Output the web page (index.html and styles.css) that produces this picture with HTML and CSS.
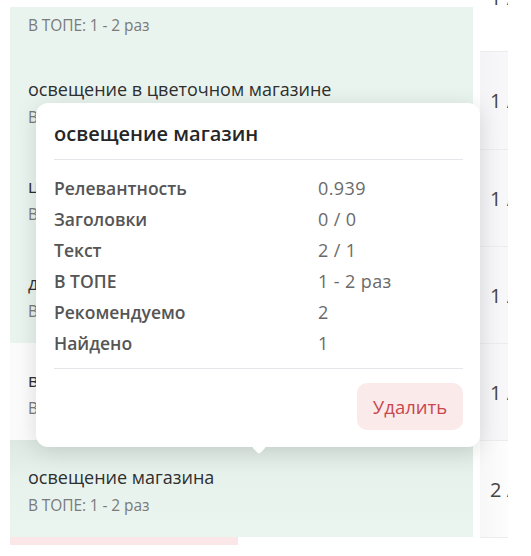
FILE: index.html
```html
<!DOCTYPE html>
<html lang="ru">
<head>
<meta charset="utf-8">
<link rel="stylesheet" href="styles.css">
</head>
<body>
<div class="page">
  <div class="list">
    <div class="row first">
      <div class="cell-main green topcut">
        <div class="sub">В ТОПЕ: 1 - 2 раз</div>
      </div>
      <div class="cell-side white"><span>1 / 2</span></div>
    </div>
    <div class="row">
      <div class="cell-main green">
        <div class="title">освещение в цветочном магазине</div>
        <div class="sub">В ТОПЕ: 1 - 2 раз</div>
      </div>
      <div class="cell-side"><span>1 / 2</span></div>
    </div>
    <div class="row">
      <div class="cell-main green">
        <div class="title">цветочный магазин освещение</div>
        <div class="sub">В ТОПЕ: 1 - 2 раз</div>
      </div>
      <div class="cell-side"><span>1 / 2</span></div>
    </div>
    <div class="row">
      <div class="cell-main green">
        <div class="title">дизайн освещения магазина</div>
        <div class="sub">В ТОПЕ: 1 - 2 раз</div>
      </div>
      <div class="cell-side"><span>1 / 2</span></div>
    </div>
    <div class="row">
      <div class="cell-main plain">
        <div class="title">витрина освещение магазин</div>
        <div class="sub">В ТОПЕ: 1 - 2 раз</div>
      </div>
      <div class="cell-side"><span>1 / 2</span></div>
    </div>
    <div class="row">
      <div class="cell-main green shaded">
        <div class="title">освещение магазина</div>
        <div class="sub">В ТОПЕ: 1 - 2 раз</div>
      </div>
      <div class="cell-side light"><span>2 / 2</span></div>
    </div>
    <div class="row last">
      <div class="pink-strip"></div>
    </div>
  </div>

  <div class="popup">
    <div class="popup-title">освещение магазин</div>
    <div class="popup-stats">
      <div class="label">Релевантность</div><div class="value">0.939</div>
      <div class="label">Заголовки</div><div class="value">0 / 0</div>
      <div class="label">Текст</div><div class="value">2 / 1</div>
      <div class="label">В ТОПЕ</div><div class="value">1 - 2 раз</div>
      <div class="label">Рекомендуемо</div><div class="value">2</div>
      <div class="label">Найдено</div><div class="value">1</div>
    </div>
    <div class="popup-actions">
      <button class="btn-delete" type="button">Удалить</button>
    </div>
    <div class="popup-arrow"></div>
  </div>
</div>
</body>
</html>
```

FILE: styles.css
```css
* { box-sizing: border-box; }
html, body { margin: 0; padding: 0; background: #fff; }
body {
  font-family: "Open Sans", "Noto Sans", sans-serif;
  color: #333;
  width: 531px;
  height: 556px;
  overflow: hidden;
}
.page {
  position: relative;
  width: 531px;
  height: 556px;
  overflow: hidden;
}
.list {
  margin-top: -45px;
  padding-left: 10px;
  display: flex;
  flex-direction: column;
}
.row {
  display: flex;
  height: 97px;
}
.cell-main {
  width: 463px;
  padding: 24px 18px 0 18px;
  display: flex;
  flex-direction: column;
}
.row.first .cell-main { padding-top: 55px; }
.cell-main.green { background: #e9f4ee; }
.cell-main.topcut { background: linear-gradient(#fff 52px, #e9f4ee 52px); }
.cell-main.plain { background: #fcfbfb; }
.cell-main.shaded { background: linear-gradient(#dde8e3, #e8f2ed 40%, #eaf5f0); }
.title {
  font-size: 18px;
  line-height: 26px;
  color: #2f2f2f;
  white-space: nowrap;
}
.sub {
  margin-top: 4px;
  font-size: 15.5px;
  line-height: 22px;
  color: #7a7a7a;
  letter-spacing: -0.1px;
  white-space: nowrap;
}
.cell-side {
  margin-left: 7px;
  width: 28px;
  border-top: 1px solid #ececee;
  background: linear-gradient(90deg, #f4f4f6, #f8f8fa);
  display: flex;
  align-items: center;
  padding-left: 10px;
  overflow: hidden;
  white-space: nowrap;
  font-size: 20px;
  color: #444;
}
.cell-side.white { background: #fff; border-top: none; border-bottom: 1px solid #ececee; }
.row.first .cell-side { align-items: flex-end; padding-bottom: 40px; }
.row.first + .row .cell-side { border-top: none; }
.cell-side.light { background: linear-gradient(90deg, #f7f7f8, #fdfdfd); }
.row.last { height: 40px; border-top: 1px solid #ececee; margin-left: 470px; width: 28px; }
.pink-strip {
  position: absolute;
  left: 10px;
  top: 537px;
  width: 228px;
  height: 8px;
  background: #fbe7e7;
}

.popup {
  position: absolute;
  left: 36px;
  top: 103px;
  width: 444px;
  height: 344px;
  background: #fff;
  border-radius: 12px;
  box-shadow: 0 4px 22px rgba(0, 0, 0, 0.13);
  padding: 18px 17px 17px 18px;
  display: flex;
  flex-direction: column;
}
.popup-title {
  font-size: 20px;
  line-height: 26px;
  font-weight: 600;
  color: #262626;
  padding-bottom: 12px;
  border-bottom: 1px solid #e6e6ea;
  white-space: nowrap;
}
.popup-stats {
  display: grid;
  grid-template-columns: 264px 1fr;
  grid-auto-rows: 31px;
  align-items: center;
  padding: 12px 0 10px;
  border-bottom: 1px solid #e6e6ea;
}
.label {
  font-size: 17.5px;
  font-weight: 600;
  color: #555;
  white-space: nowrap;
}
.value {
  font-size: 18px;
  letter-spacing: 0.4px;
  color: #6a6a6a;
  white-space: nowrap;
}
.popup-actions {
  display: flex;
  justify-content: flex-end;
  padding-top: 14px;
}
.btn-delete {
  width: 106px;
  height: 47px;
  border: none;
  border-radius: 10px;
  background: #fbeaea;
  color: #c9474c;
  font-family: "Open Sans", "Noto Sans", sans-serif;
  font-size: 18.5px;
  padding: 0;
}
.popup-arrow {
  position: absolute;
  left: 218px;
  bottom: -5px;
  width: 10px;
  height: 10px;
  background: #fff;
  transform: rotate(45deg);
  border-radius: 2px;
}
```
